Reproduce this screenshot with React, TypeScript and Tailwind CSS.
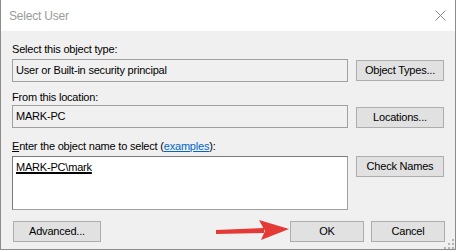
import React from 'react';

const font = { fontFamily: '"Liberation Sans", Arial, sans-serif' };

const WinButton = ({ children, className = '' }: { children: React.ReactNode; className?: string }) => (
  <div
    className={`h-[21px] flex items-center justify-center bg-[#e1e1e1] border border-[#adadad] text-[11px] tracking-[-0.2px] text-black ${className}`}
  >
    {children}
  </div>
);

const ReadBox = ({ text }: { text: string }) => (
  <div className="h-[23px] w-[336px] border border-[#a0a0a0] bg-[#f0f0f0] pl-[3px] pt-[4px] text-[11px] leading-[13px] text-black">
    {text}
  </div>
);

const App = () => {
  return (
    <div className="w-[457px] h-[251px] bg-white relative overflow-hidden" style={font}>
      <div className="w-[456px] h-[250px] border-l border-r border-b border-[#8c8c8c] flex flex-col">
        {/* title bar */}
        <div className="h-[31px] bg-white flex items-center justify-between pl-[8px] pr-[9px]">
          <span className="text-[12px] text-[#9b9b9b] tracking-[-0.2px]">Select User</span>
          <svg width="11" height="11" viewBox="0 0 11 11">
            <path d="M0.5 0.5 L10.5 10.5 M10.5 0.5 L0.5 10.5" stroke="#8a8a8a" strokeWidth="1" />
          </svg>
        </div>

        <div className="flex-1 bg-[#f0f0f0] pl-[11px] pr-[10px] text-[11px] leading-[13px] tracking-[-0.2px] text-black">
          <div className="mt-[12px]">Select this object type:</div>
          <div className="mt-[3px] flex gap-[8px] items-start">
            <ReadBox text="User or Built-in security principal" />
            <WinButton className="w-[88px] mt-[1px]">Object Types...</WinButton>
          </div>

          <div className="mt-[9px]">From this location:</div>
          <div className="mt-[1px] flex gap-[8px] items-start">
            <ReadBox text="MARK-PC" />
            <WinButton className="w-[88px] mt-[2px]">Locations...</WinButton>
          </div>

          <div className="mt-[12px]">
            <span className="underline">E</span>nter the object name to select (
            <span className="text-[#0066cc] underline">examples</span>):
          </div>
          <div className="mt-[3px] flex gap-[8px] items-start">
            <div className="h-[54px] w-[336px] border border-[#a0a0a0] border-t-[#7a7a7a] border-l-[#7a7a7a] bg-white pl-[3px] pt-[4px]">
              <span className="underline decoration-[1.5px]">MARK-PC\mark</span>
            </div>
            <WinButton className="w-[88px]">Check Names</WinButton>
          </div>

          <div className="mt-[11px] flex items-center">
            <WinButton className="w-[88px] ml-[1px]">Advanced...</WinButton>
            <div className="flex-1" />
            <WinButton className="w-[74px]">OK</WinButton>
            <WinButton className="w-[74px] ml-[7px]">Cancel</WinButton>
          </div>
        </div>
      </div>

      {/* annotation arrow */}
      <svg className="absolute left-[214px] top-[219px]" width="78" height="24" viewBox="0 0 78 24">
        <polygon points="2,11 50,9 50,14 2,15" fill="#e53935" />
        <polygon points="45,1 75,10 47,21 51,12" fill="#e53935" />
      </svg>

      {/* resize grip */}
      <svg className="absolute left-[443px] top-[238px]" width="12" height="12" viewBox="0 0 12 12">
        <rect x="9" y="1" width="2" height="2" fill="#b4b4b4" />
        <rect x="5" y="5" width="2" height="2" fill="#b4b4b4" />
        <rect x="9" y="5" width="2" height="2" fill="#b4b4b4" />
        <rect x="1" y="9" width="2" height="2" fill="#b4b4b4" />
        <rect x="5" y="9" width="2" height="2" fill="#b4b4b4" />
        <rect x="9" y="9" width="2" height="2" fill="#b4b4b4" />
      </svg>
    </div>
  );
};

export default App;
